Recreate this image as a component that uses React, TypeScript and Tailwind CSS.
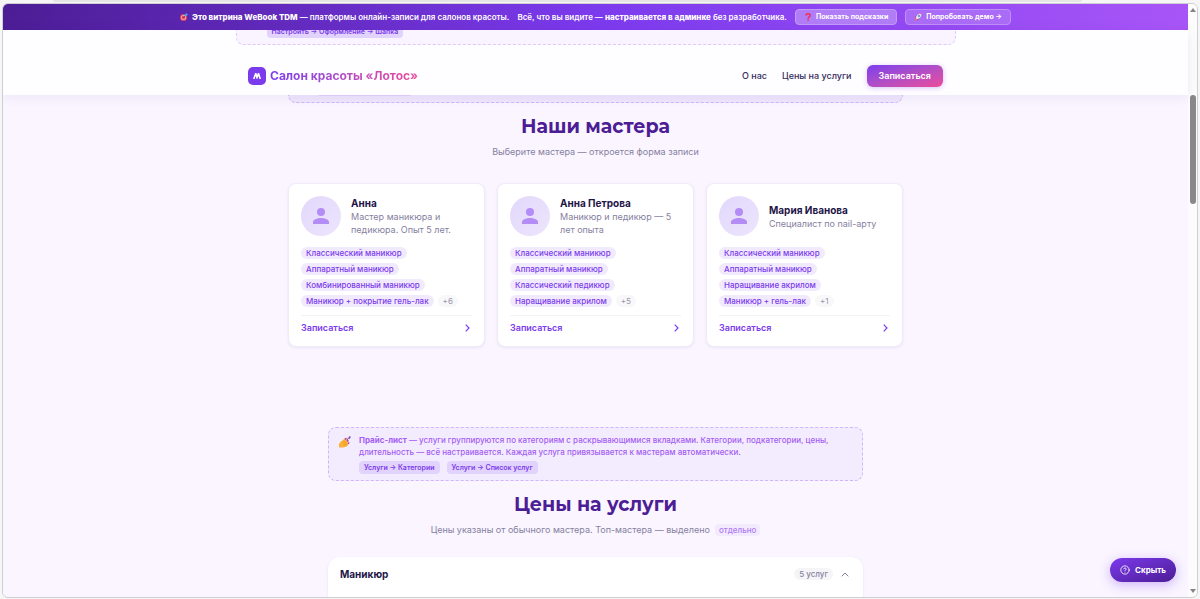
import React from "react";
import { CircleHelp } from "lucide-react";

type Master = {
  name: string;
  about: string;
  services: string[];
  more: string;
};

const masters: Master[] = [
  {
    name: "Анна",
    about: "Мастер маникюра и педикюра. Опыт 5 лет.",
    services: ["Классический маникюр", "Аппаратный маникюр", "Комбинированный маникюр", "Маникюр + покрытие гель-лак"],
    more: "+6",
  },
  {
    name: "Анна Петрова",
    about: "Маникюр и педикюр — 5 лет опыта",
    services: ["Классический маникюр", "Аппаратный маникюр", "Классический педикюр", "Наращивание акрилом"],
    more: "+5",
  },
  {
    name: "Мария Иванова",
    about: "Специалист по nail-арту",
    services: ["Классический маникюр", "Аппаратный маникюр", "Наращивание акрилом", "Маникюр + гель-лак"],
    more: "+1",
  },
];

function TargetIcon() {
  return (
    <svg viewBox="0 0 16 16" className="size-2 shrink-0" aria-hidden="true">
      <circle cx="7" cy="9" r="7" fill="#e0405e" />
      <circle cx="7" cy="9" r="5" fill="#f6b3c0" />
      <circle cx="7" cy="9" r="3.6" fill="#e0405e" />
      <path d="M7 9 L12 4" stroke="#3d3f4a" strokeWidth="1.4" />
      <path d="M9.5 6.5 L10 2.5 L13.5 0 L14 2 L16 2.5 L13.5 6 Z" fill="#3ba4ee" />
    </svg>
  );
}

function QuestionIcon() {
  return (
    <svg viewBox="0 0 16 16" className="size-2 shrink-0" aria-hidden="true">
      <path d="M4 5.2 C4 .2 12.5 .4 12.3 5 C12.2 7.7 8.2 7.5 8.2 11" fill="none" stroke="#ee2f55" strokeWidth="3" />
      <circle cx="8.2" cy="14.2" r="1.8" fill="#ee2f55" />
    </svg>
  );
}

function RocketIcon() {
  return (
    <svg viewBox="0 0 16 16" className="size-2 shrink-0" aria-hidden="true">
      <path d="M1 9 L5 5 L8 6 L5 10 Z M7 15 L11 11 L10 8 L6 11 Z" fill="#c33b62" />
      <path d="M3.5 10 C4 5 9 1 15.5 .5 C15 7 11 12 6 12.5 Z" fill="#dfe3ee" />
      <path d="M12 .9 L15.5 .5 L15 4 Z" fill="#e0405e" />
      <circle cx="10" cy="6" r="2" fill="#4b86c9" />
      <path d="M1 15 C1 12 2.5 11 4.5 11.5 C5 13.5 4 15 1 15 Z" fill="#f7703b" />
    </svg>
  );
}

function NailPolishIcon() {
  return (
    <svg viewBox="0 0 24 24" className="size-3 shrink-0" aria-hidden="true">
      <path d="M0 16 C3 11 7 8 12 5 L15 7 L12 10 L17 9 L18 11 L16 13 L19 14 L18 17 L17 20 C12 23 8 23 4 23 L0 23 Z" fill="#fbb034" />
      <path d="M8 12 L13 10 M9 15 L15 13 M9 18 L16 17" stroke="#dd8a1d" strokeWidth="1" />
      <path d="M11 5 L14.5 3 L15.5 6.5 L13 8 Z M15.5 8.5 L19 7.5 L19 11 L17 12 Z M17.5 13 L20.5 12 L20.5 15.5 L18 16.5 Z" fill="#c2408d" />
      <path d="M15 9 L19 4" stroke="#6c4a9c" strokeWidth="2" />
      <path d="M18 4.5 L21 0 L24 2 L20.5 6.5 Z" fill="#7d56b5" />
    </svg>
  );
}

function PersonIcon() {
  return (
    <svg viewBox="0 0 16 16" className="size-4" fill="#b38cf5" aria-hidden="true">
      <circle cx="8" cy="4" r="4" />
      <path d="M0 16 v-2 c0-2.7 5.3-4 8-4 s8 1.3 8 4 v2 z" />
    </svg>
  );
}

function Tag({ children }: { children: React.ReactNode }) {
  return <span className="rounded bg-[#e2d3fc] px-[5px] text-[7px] leading-[13px] font-semibold text-[#7c3aed]">{children}</span>;
}

function SectionTitle({ children }: { children: React.ReactNode }) {
  return (
    <h2 className="mt-3 text-center font-['Montserrat','Inter',sans-serif] text-[19px] leading-6 font-bold text-[#4c1d95]">{children}</h2>
  );
}

function MasterCard({ master }: { master: Master }) {
  return (
    <article className="flex flex-col rounded-lg border border-[#f0ebf6] bg-white px-3 pt-3 pb-[11px] shadow-[0_1px_3px_rgba(76,29,149,0.08)]">
      <div className="flex items-center gap-[10px]">
        <div className="flex size-10 shrink-0 items-center justify-center rounded-full bg-linear-to-br from-[#e2d7fb] to-[#ede5fd]">
          <PersonIcon />
        </div>
        <div>
          <h3 className="text-[10px] leading-[14px] font-bold text-[#1e1548]">{master.name}</h3>
          <p className="text-[9px] leading-[13px] text-[#8681a0]">{master.about}</p>
        </div>
      </div>
      <ul className="mt-[11px] flex flex-wrap gap-1">
        {master.services.map((service) => (
          <li key={service} className="rounded-full bg-[#f1eafd] px-[5px] text-[8px] leading-3 font-medium text-[#7c3aed]">
            {service}
          </li>
        ))}
        <li className="rounded-full bg-[#f8f8fa] px-[5px] text-[8px] leading-3 text-[#9a97ab]">{master.more}</li>
      </ul>
      <a href="#booking" className="mt-2 flex items-center justify-between border-t border-[#f4f2f7] pt-[5px] pr-[2px] text-[9px] leading-[14px] font-semibold text-[#7c3aed]">
        Записаться
        <svg viewBox="0 0 5 8" className="h-2 w-[5px]" fill="none" stroke="currentColor" strokeWidth="1.2" aria-hidden="true">
          <path d="M.7 .7 L4 4 L.7 7.3" />
        </svg>
      </a>
    </article>
  );
}

function ScrollRail() {
  return (
    <div className="flex w-[9px] shrink-0 flex-col items-center bg-[#fcfcfc] py-1" aria-hidden="true">
      <svg viewBox="0 0 6 4" className="h-1 w-[6px] shrink-0" fill="#858585">
        <path d="M3 0 L6 4 H0 Z" />
      </svg>
      <div className="flex w-[6px] flex-1 flex-col pt-[83px]">
        <div className="h-[22%] rounded-full bg-[#898989]" />
      </div>
      <svg viewBox="0 0 6 4" className="h-1 w-[6px] shrink-0" fill="#858585">
        <path d="M3 4 L6 0 H0 Z" />
      </svg>
    </div>
  );
}

export default function App() {
  return (
    <div className="flex h-screen flex-col bg-[#f6f6f6] px-[2px] pb-px font-['Inter','Liberation_Sans',sans-serif]">
      <div className="mr-[116px] ml-[51px] h-[2px] shrink-0 rounded-b bg-[#e5e5e5]" />
      <div className="mt-px flex min-h-0 flex-1 overflow-hidden rounded-md border border-[#cfcfd3]">
        <div className="relative flex min-w-0 flex-1 flex-col bg-[#faf5ff]">
          <aside className="flex h-[26px] shrink-0 items-center justify-center gap-2 bg-linear-to-r from-[#4c1d95] via-[#7c3aed] to-[#a855f7] text-[8px] whitespace-nowrap text-white">
            <p className="flex items-center gap-1 font-semibold">
              <TargetIcon />
              <span>
                <strong className="font-extrabold">Это витрина WeBook TDM</strong> — платформы онлайн-записи для салонов красоты.
              </span>
            </p>
            <p className="font-semibold">
              Всё, что вы видите — <strong className="font-extrabold">настраивается в админке</strong> без разработчика.
            </p>
            <button type="button" className="flex h-4 items-center gap-1 rounded border border-[#c49bf9] bg-[#b07df6] px-2 text-[7px] font-bold">
              <QuestionIcon />
              Показать подсказки
            </button>
            <button type="button" className="flex h-4 items-center gap-1 rounded border border-[#c08ff9] bg-[#aa6bf6] px-2 text-[7px] font-bold">
              <RocketIcon />
              Попробовать демо →
            </button>
          </aside>

          <header className="z-10 flex shrink-0 flex-col items-center bg-[#fefdff] shadow-[0_2px_12px_rgba(76,29,149,0.08)]">
            <div className="flex h-[15px] w-full max-w-[720px] items-end overflow-hidden rounded-b-lg border border-t-0 border-dashed border-[#dccbfa] bg-[#f9f4ff] px-[30px] pb-[6px]">
              <Tag>Настроить → Оформление → Шапка</Tag>
            </div>
            <div className="mt-5 mb-2 flex h-[22px] w-full max-w-[695px] items-center justify-between">
              <a href="#top" className="flex items-center gap-1">
                <span className="flex size-[18px] items-center justify-center rounded-[5px] bg-[#7c3aed]">
                  <svg viewBox="0 0 16 12" className="h-[6px] w-2" fill="none" stroke="white" strokeWidth="3.2" aria-hidden="true">
                    <path d="M1.5 12 L5.5 1 L8 9 L11 1 L14.5 12" />
                  </svg>
                </span>
                <span className="bg-linear-to-r from-[#7c3aed] to-[#ec4899] bg-clip-text text-[12px] font-bold text-transparent">Салон красоты «Лотос»</span>
              </a>
              <nav className="flex items-center gap-[15px] text-[9px] font-medium text-[#332b5c]">
                <a href="#about">О нас</a>
                <a href="#prices">Цены на услуги</a>
                <a href="#booking" className="rounded-md bg-linear-to-br from-[#7c3aed] to-[#ec4899] px-3 leading-[22px] font-semibold text-white shadow-[0_1px_5px_rgba(124,58,237,0.3)]">
                  Записаться
                </a>
              </nav>
            </div>
          </header>

          <main className="min-h-0 flex-1 overflow-hidden">
            <section className="mx-auto max-w-[615px]">
              <div className="flex h-2 rounded-b-lg border border-t-0 border-dashed border-[#cfb6fb] bg-[#efe7fd] pl-[30px]">
                <span className="h-px w-[92px] bg-[#e2d3fc]" />
              </div>
              <SectionTitle>Наши мастера</SectionTitle>
              <p className="mt-[6px] text-center text-[9px] leading-[14px] text-[#8681a0]">Выберите мастера — откроется форма записи</p>
              <div className="mt-6 grid grid-cols-3 gap-3">
                {masters.map((master) => (
                  <MasterCard key={master.name} master={master} />
                ))}
              </div>
            </section>

            <section id="prices" className="mx-auto mt-20 max-w-[535px]">
              <div className="flex items-start gap-2 rounded-lg border border-dashed border-[#cfb6fb] bg-[#f3ecfe] px-[10px] py-[6px]">
                <span className="pt-[2px]">
                  <NailPolishIcon />
                </span>
                <div>
                  <p className="text-[8px] leading-[12px] font-medium text-[#a55df3]">
                    <strong className="font-bold">Прайс-лист</strong> — услуги группируются по категориям с раскрывающимися вкладками. Категории, подкатегории, цены, длительность — всё настраивается. Каждая услуга привязывается к мастерам автоматически.
                  </p>
                  <div className="mt-[3px] flex gap-[7px]">
                    <Tag>Услуги → Категории</Tag>
                    <Tag>Услуги → Список услуг</Tag>
                  </div>
                </div>
              </div>
              <SectionTitle>Цены на услуги</SectionTitle>
              <p className="mt-[6px] flex items-center justify-center gap-[5px] text-[9px] leading-[14px] text-[#8681a0]">
                Цены указаны от обычного мастера. Топ-мастера — выделено
                <span className="rounded-sm bg-[#f3eafe] px-1 text-[8px] leading-3 font-medium text-[#b07bf5]">отдельно</span>
              </p>
              <div className="mt-5 rounded-t-xl bg-white px-3 pb-10 shadow-[0_1px_3px_rgba(76,29,149,0.08)]">
                <button type="button" aria-expanded="true" className="flex h-[34px] w-full items-center">
                  <span className="flex-1 text-left text-[10px] font-bold text-[#1e1548]">Маникюр</span>
                  <span className="rounded-full bg-[#f5f5f7] px-[5px] text-[8px] leading-3 font-medium text-[#8681a0]">5 услуг</span>
                  <svg viewBox="0 0 8 5" className="mr-[2px] ml-2 h-[5px] w-2 text-[#8681a0]" fill="none" stroke="currentColor" aria-hidden="true">
                    <path d="M.7 4.3 L4 1 L7.3 4.3" />
                  </svg>
                </button>
              </div>
            </section>
          </main>

          <button
            type="button"
            className="absolute right-3 bottom-[15px] z-20 flex h-6 items-center gap-[5px] rounded-full bg-linear-to-br from-[#7c3aed] to-[#4c1d95] px-[10px] text-[8px] font-bold text-white shadow-[0_3px_12px_rgba(124,58,237,0.35)]"
          >
            <CircleHelp className="size-[10px]" aria-hidden="true" />
            Скрыть
          </button>
        </div>
        <ScrollRail />
      </div>
    </div>
  );
}
